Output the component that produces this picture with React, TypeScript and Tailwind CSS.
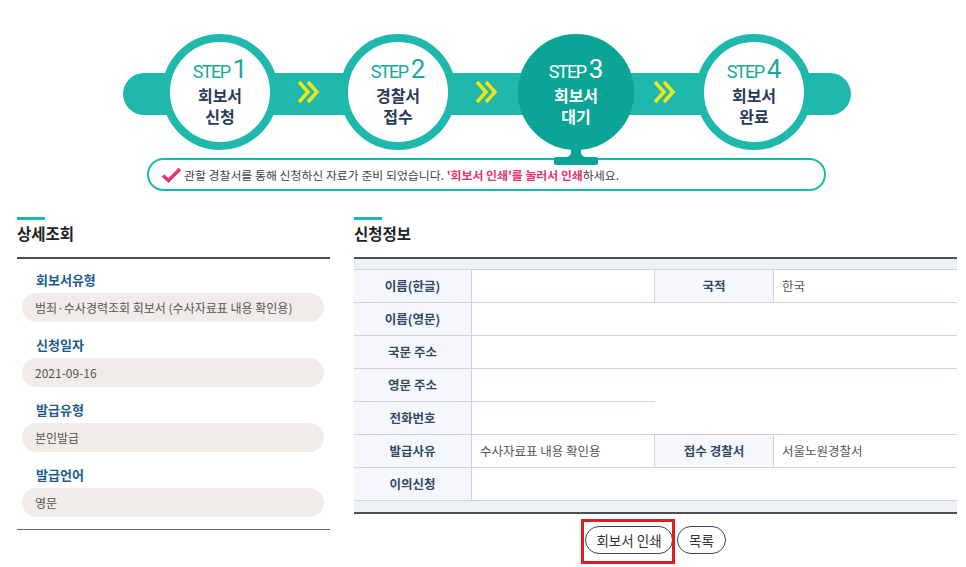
import React from "react";

const steps = [
    { n: 1, lines: ["회보서", "신청"] },
    { n: 2, lines: ["경찰서", "접수"] },
    { n: 3, lines: ["회보서", "대기"], active: true },
    { n: 4, lines: ["회보서", "완료"] },
];

const details = [
    { label: "회보서유형", value: "범죄·수사경력조회 회보서 (수사자료표 내용 확인용)" },
    { label: "신청일자", value: "2021-09-16" },
    { label: "발급유형", value: "본인발급" },
    { label: "발급언어", value: "영문" },
];

function Chevron() {
    return (
        <svg width="24" height="24" viewBox="0 0 24 24" fill="none">
            <polyline points="2,2 11,12 2,22" stroke="#f2e514" strokeWidth="3.5" />
            <polyline points="11,2 20,12 11,22" stroke="#f2e514" strokeWidth="3.5" />
        </svg>
    );
}

function StepCircle({ n, lines, active }: { n: number; lines: string[]; active?: boolean }) {
    return (
        <div
            className={`relative w-[116px] h-[116px] shrink-0 rounded-full border-[8px] flex flex-col items-center justify-center ${
                active ? "bg-[#0aa597] border-[#0aa597]" : "bg-white border-[#1fb8ac]"
            }`}
        >
            <div className={`flex items-baseline font-['Roboto',sans-serif] -mt-[4px] ${active ? "text-white" : "text-[#17a99c]"}`}>
                <span className="text-[18px] tracking-[-1.5px]">STEP</span>
                <span className="ml-[3px] text-[26px] leading-[30px]">{n}</span>
            </div>
            {lines.map(line => (
                <div
                    key={line}
                    className={`text-[16px] leading-[21px] font-bold ${active ? "text-white" : "text-[#283c57]"}`}
                >
                    {line}
                </div>
            ))}
            {active && (
                <svg className="absolute left-1/2 -translate-x-1/2 top-[104px]" width="46" height="20" viewBox="0 0 46 20">
                    <path
                        d="M18 0 H28 V6 Q28 11 34 11 H43 Q45 11 45 13 V17 Q45 19 43 19 H3 Q1 19 1 17 V13 Q1 11 3 11 H12 Q18 11 18 6 Z"
                        fill="#0aa597"
                    />
                </svg>
            )}
        </div>
    );
}

function Label({ children, className = "" }: { children?: React.ReactNode; className?: string }) {
    return (
        <div className={`h-[33px] flex items-center justify-center bg-[#f5f7fa] border-b border-r border-[#cdd3e3] text-[12.5px] font-bold text-[#2f4a68] ${className}`}>
            {children}
        </div>
    );
}

function Value({ children, className = "" }: { children?: React.ReactNode; className?: string }) {
    return (
        <div className={`h-[33px] flex items-center pl-[8px] text-[12.5px] text-[#555] ${className}`}>
            {children}
        </div>
    );
}

export default function App() {
    return (
        <div className="w-[966px] min-h-[567px] bg-white pt-[34px] font-['Noto_Sans_CJK_KR','Noto_Sans',sans-serif]">
            {/* steps */}
            <div className="relative ml-[123px] w-[728px] h-[116px]">
                <div className="absolute left-0 right-0 top-[39px] h-[42px] rounded-full bg-[#1fb8ac]" />
                <div className="relative flex items-center h-full pl-[39px]">
                    {steps.map((s, i) => (
                        <React.Fragment key={s.n}>
                            {i > 0 && (
                                <div className="w-[62px] flex justify-center">
                                    <Chevron />
                                </div>
                            )}
                            <StepCircle n={s.n} lines={s.lines} active={s.active} />
                        </React.Fragment>
                    ))}
                </div>
            </div>

            {/* notice */}
            <div className="ml-[147px] mt-[8px] w-[679px] h-[33px] rounded-full border-[2.5px] border-[#1fb8ac] flex items-center pl-[12px]">
                <svg width="21" height="16" viewBox="0 0 21 16" fill="none">
                    <path d="M2 8.5 L7.5 13.5 L19 2" stroke="#e8336d" strokeWidth="3.5" />
                </svg>
                <p className="ml-[2px] text-[11.9px] text-[#444]">
                    관할 경찰서를 통해 신청하신 자료가 준비 되었습니다.{" "}
                    <span className="font-bold text-[#e8336d]">'회보서 인쇄'를 눌러서 인쇄</span>하세요.
                </p>
            </div>

            <div className="flex mt-[26px] pl-[17px] gap-[24px]">
                {/* detail */}
                <div className="w-[313px]">
                    <div className="w-[28px] h-[3px] bg-[#1fb8ac]" />
                    <h2 className="mt-[1px] text-[15.5px] leading-[24px] font-bold text-[#222]">상세조회</h2>
                    <div className="mt-[12px] h-[2px] bg-[#4b4e53]" />
                    <div className="pt-[11px] pb-[12px] flex flex-col gap-[13px]">
                        {details.map(d => (
                            <div key={d.label}>
                                <div className="pl-[19px] text-[13px] leading-[20px] font-bold text-[#1d5b8c]">{d.label}</div>
                                <div className="mt-[3px] ml-[5px] mr-[6px] h-[29px] rounded-full bg-[#f2ece9] flex items-center pl-[13px] text-[12px] text-[#555]">
                                    {d.value}
                                </div>
                            </div>
                        ))}
                    </div>
                    <div className="h-px bg-[#666]" />
                </div>

                {/* apply info */}
                <div className="w-[603px]">
                    <div className="w-[28px] h-[3px] bg-[#1fb8ac]" />
                    <h2 className="mt-[1px] text-[15.5px] leading-[24px] font-bold text-[#222]">신청정보</h2>
                    <div className="mt-[12px] border-t-2 border-b-2 border-[#4b4e53]">
                        <div className="h-[11px] bg-[#eef1f6] border-b border-[#cdd3e3]" />
                        <div className="grid grid-cols-[118px_183px_119px_183px]">
                            <Label>이름(한글)</Label>
                            <Value className="border-b border-r border-[#cdd3e3]" />
                            <Label>국적</Label>
                            <Value className="border-b border-[#cdd3e3]">한국</Value>

                            <Label>이름(영문)</Label>
                            <Value className="col-span-3 border-b border-[#cdd3e3]" />

                            <Label>국문 주소</Label>
                            <Value className="col-span-3 border-b border-[#cdd3e3]" />

                            <Label>영문 주소</Label>
                            <Value className="border-b border-[#cdd3e3]" />
                            <Value className="col-span-2" />

                            <Label>전화번호</Label>
                            <Value className="col-span-3 border-b border-[#cdd3e3]" />

                            <Label>발급사유</Label>
                            <Value className="border-b border-r border-[#cdd3e3]">수사자료표 내용 확인용</Value>
                            <Label>접수 경찰서</Label>
                            <Value className="border-b border-[#cdd3e3]">서울노원경찰서</Value>

                            <Label>이의신청</Label>
                            <Value className="col-span-3 border-b border-[#cdd3e3]" />
                        </div>
                        <div className="h-[11px] bg-[#eef1f6]" />
                    </div>

                    <div className="mt-[12px] flex justify-center gap-[4px]">
                        <div className="relative">
                            <button className="w-[88px] h-[28px] rounded-full border-[1.5px] border-[#3b4556] text-[13.5px] text-[#333]">
                                회보서 인쇄
                            </button>
                            <div className="absolute -left-[4px] -right-[2px] -top-[7px] -bottom-[10px] border-[3px] border-[#e11d24]" />
                        </div>
                        <button className="w-[49px] h-[28px] rounded-full border-[1.5px] border-[#3b4556] text-[13.5px] text-[#333]">
                            목록
                        </button>
                    </div>
                </div>
            </div>
        </div>
    );
}
